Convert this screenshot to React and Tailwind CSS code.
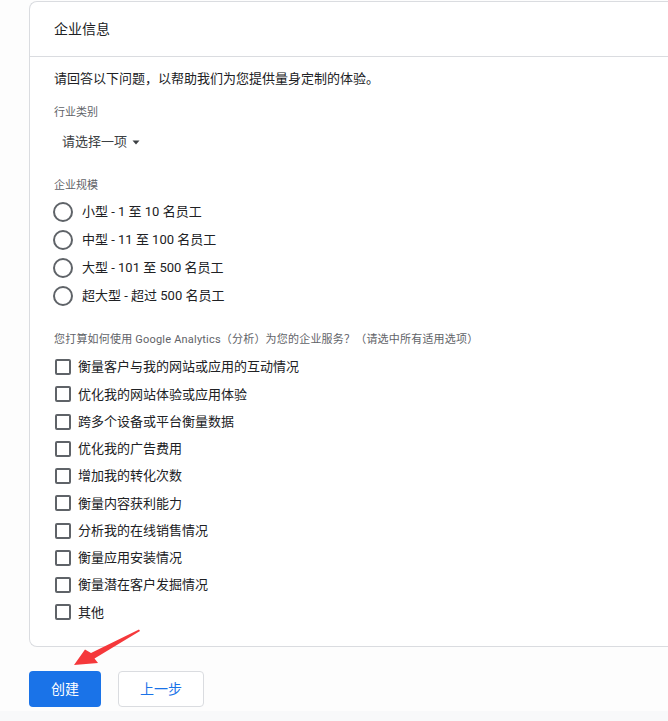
const sizes = [
  "小型 - 1 至 10 名员工",
  "中型 - 11 至 100 名员工",
  "大型 - 101 至 500 名员工",
  "超大型 - 超过 500 名员工",
];

const uses = [
  "衡量客户与我的网站或应用的互动情况",
  "优化我的网站体验或应用体验",
  "跨多个设备或平台衡量数据",
  "优化我的广告费用",
  "增加我的转化次数",
  "衡量内容获利能力",
  "分析我的在线销售情况",
  "衡量应用安装情况",
  "衡量潜在客户发掘情况",
  "其他",
];

export default function App() {
  return (
    <div
      className="relative h-[721px] w-[668px] overflow-hidden bg-[#fdfdfd] text-[#202124]"
      style={{ fontFamily: 'Roboto, "Noto Sans CJK SC", sans-serif' }}
    >
      <div className="h-[711px] pt-px">
        <div className="ml-[29px] w-[700px] rounded-l-lg border border-r-0 border-[#dadce0] bg-white">
          <div className="flex h-[55px] items-center border-b border-[#dadce0] pl-[24px] text-[14px]">
            企业信息
          </div>
          <div className="pl-[24px] pt-[12px] pb-[20px]">
            <div className="text-[13px] leading-[20px]">
              请回答以下问题，以帮助我们为您提供量身定制的体验。
            </div>
            <div className="mt-[16px] text-[11px] leading-[16px] text-[#5f6368]">行业类别</div>
            <div className="mt-[11px] flex h-[20px] items-center gap-[4px] pl-[8px] text-[13px] text-[#3c4043]">
              请选择一项
              <svg width="10" height="10" viewBox="0 0 10 10">
                <path d="M1.5 3.5h7L5 7.5z" fill="#3c4043" />
              </svg>
            </div>
            <div className="mt-[26px] text-[11px] leading-[16px] text-[#5f6368]">企业规模</div>
            <div className="mt-[4px]">
              {sizes.map((s) => (
                <div key={s} className="flex h-[28px] items-center gap-[9px]">
                  <span className="ml-[-1px] h-[20px] w-[20px] rounded-full border-2 border-[#5f6368]" />
                  <span className="text-[13px]">{s}</span>
                </div>
              ))}
            </div>
            <div className="mt-[22px] text-[11px] leading-[16px] tracking-[0.2px] text-[#5f6368]">
              您打算如何使用 Google Analytics（分析）为您的企业服务？（请选中所有适用选项）
            </div>
            <div className="mt-[5.5px]">
              {uses.map((u) => (
                <div key={u} className="flex h-[27.25px] items-center gap-[7px]">
                  <span className="ml-px h-[16px] w-[16px] rounded-[2px] border-2 border-[#5f6368]" />
                  <span className="text-[13px]">{u}</span>
                </div>
              ))}
            </div>
          </div>
        </div>
        <div className="ml-[29px] mt-[24px] flex gap-[17px]">
          <button className="h-[36px] w-[72px] rounded-[4px] bg-[#1a73e8] text-[14px] text-white">
            创建
          </button>
          <button className="h-[36px] w-[86px] rounded-[4px] border border-[#dadce0] bg-white text-[14px] text-[#1a73e8]">
            上一步
          </button>
        </div>
      </div>
      <div className="h-[10px] bg-[#f8f9fa]" />
      <svg className="absolute left-0 top-0" width="200" height="700" viewBox="0 0 200 700">
        <path
          d="M139 629.5 L91 653 L85 649.5 L74 665 L98 663 L94.5 658.5 L140 631 Z"
          fill="#f5383b"
        />
      </svg>
    </div>
  );
}
